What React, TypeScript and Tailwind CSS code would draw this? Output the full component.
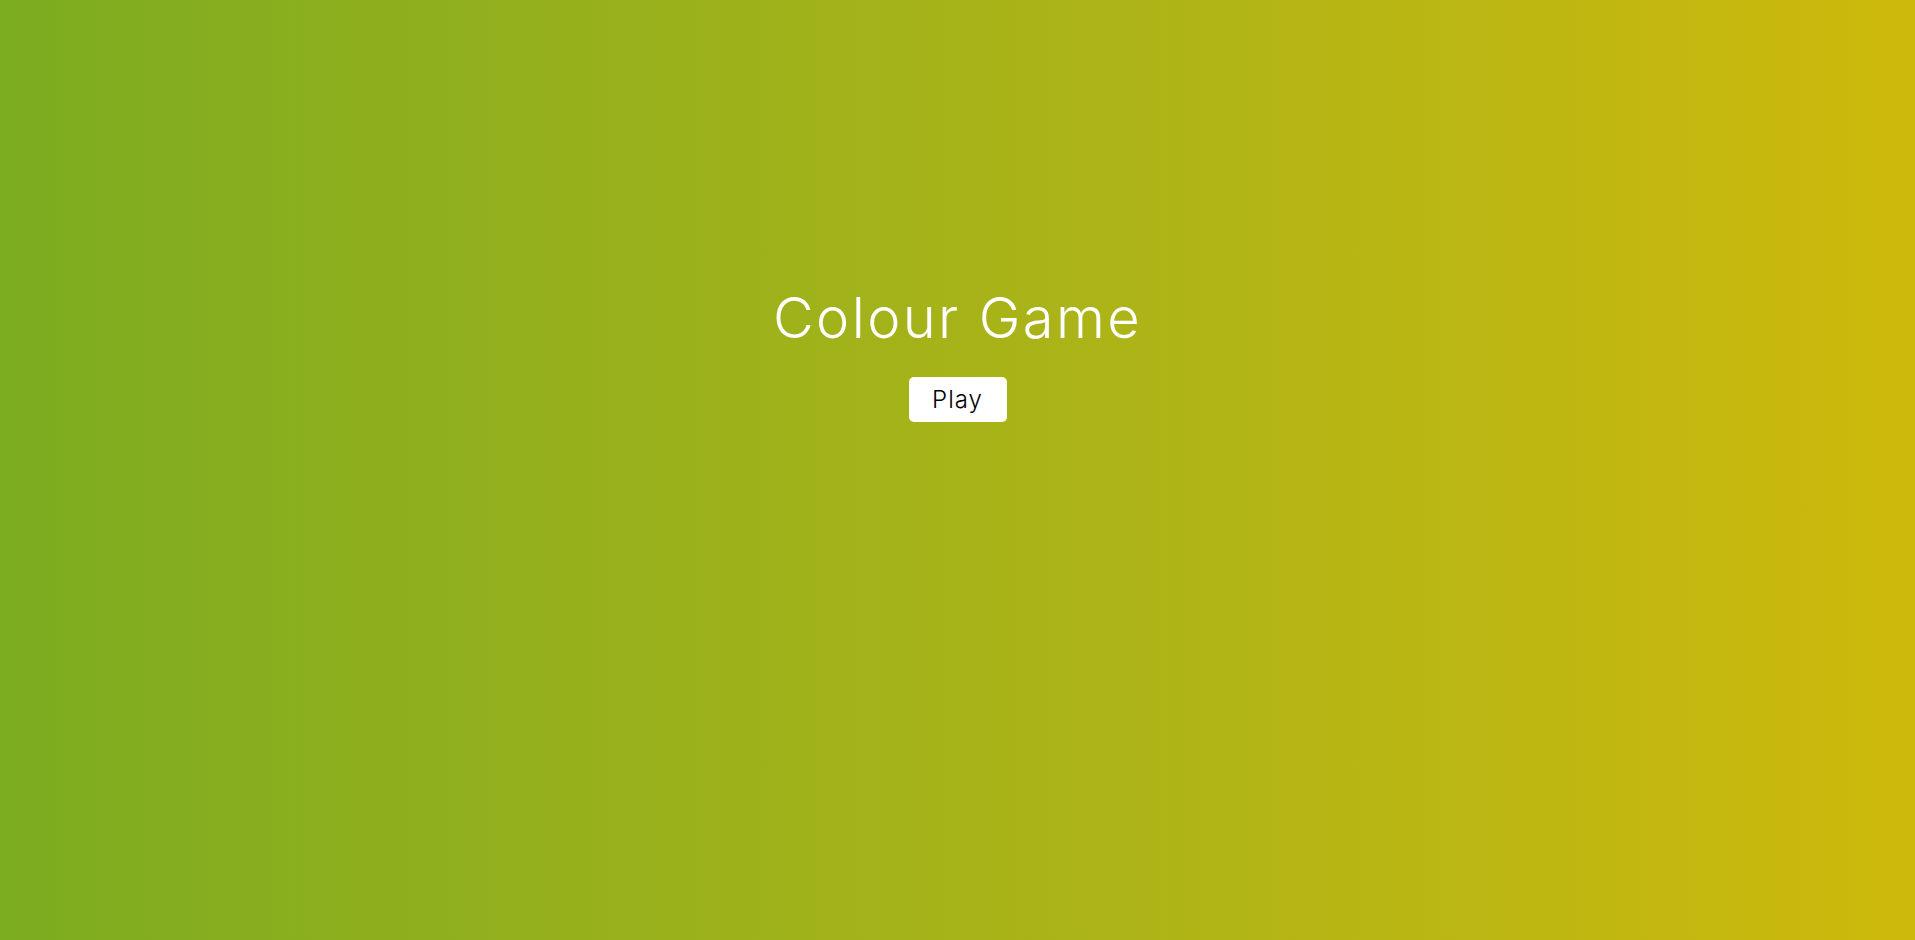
import React from 'react';

const App: React.FC = () => {
  return (
    <div className="h-screen w-full bg-gradient-to-r from-[#7cac20] to-[#cdb90b] flex flex-col items-center pt-[286px] font-['Inter',sans-serif]">
      <h1 className="text-[56px] leading-[64px] font-light text-white tracking-[2.4px]">Colour Game</h1>
      <button className="mt-[27px] w-[98px] h-[45px] bg-white rounded-[5px] text-[24px] font-light text-black tracking-[1px] flex items-center justify-center">
        Play
      </button>
    </div>
  );
};

export default App;
